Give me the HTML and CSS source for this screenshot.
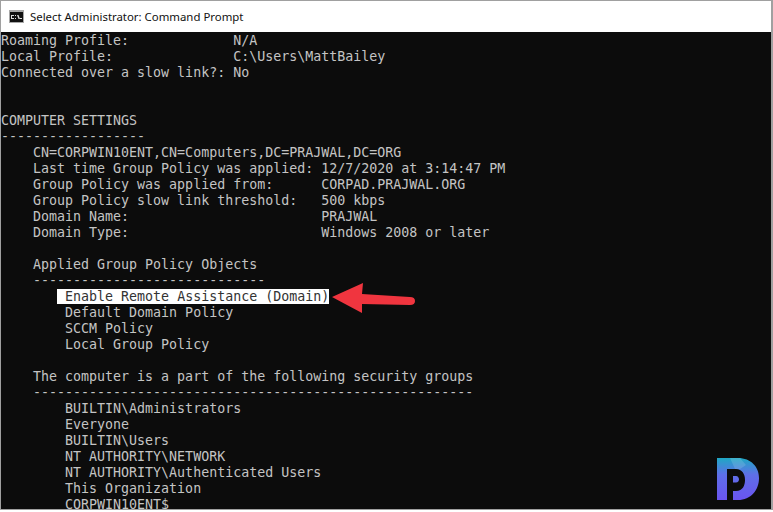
FILE: index.html
```html
<!DOCTYPE html>
<html lang="en">
<head>
<meta charset="utf-8">
<title>Select Administrator: Command Prompt</title>
<link rel="stylesheet" href="styles.css">
</head>
<body>
<div class="window">
  <header class="titlebar">
    <svg class="cmd-icon" width="15" height="13" viewBox="0 0 15 13">
      <rect x="0" y="0" width="15" height="13" fill="#a8a8a8"/>
      <rect x="1" y="2" width="13" height="10" fill="#111"/>
      <rect x="2" y="5" width="3" height="4" fill="#ddd"/>
      <rect x="3" y="6" width="2" height="2" fill="#111"/>
      <rect x="6" y="5" width="1" height="1" fill="#ddd"/>
      <rect x="6" y="8" width="1" height="1" fill="#ddd"/>
      <path d="M8 5 L9.5 5 L11 9 L9.5 9 Z" fill="#ddd"/>
      <rect x="11" y="8" width="2" height="1" fill="#ddd"/>
    </svg>
    <span class="title">Select Administrator: Command Prompt</span>
  </header>
  <main class="console">
<pre class="output">Roaming Profile:             N/A
Local Profile:               C:\Users\MattBailey
Connected over a slow link?: No


COMPUTER SETTINGS
------------------
    CN=CORPWIN10ENT,CN=Computers,DC=PRAJWAL,DC=ORG
    Last time Group Policy was applied: 12/7/2020 at 3:14:47 PM
    Group Policy was applied from:      CORPAD.PRAJWAL.ORG
    Group Policy slow link threshold:   500 kbps
    Domain Name:                        PRAJWAL
    Domain Type:                        Windows 2008 or later

    Applied Group Policy Objects
    -----------------------------
       <span class="selected"> Enable Remote Assistance (Domain)</span>
        Default Domain Policy
        SCCM Policy
        Local Group Policy

    The computer is a part of the following security groups
    -------------------------------------------------------
        BUILTIN\Administrators
        Everyone
        BUILTIN\Users
        NT AUTHORITY\NETWORK
        NT AUTHORITY\Authenticated Users
        This Organization
        CORPWIN10ENT$</pre>
    <svg class="arrow" width="84" height="31" viewBox="0 0 84 31">
      <path d="M0 14 L31 0 L30 11 L78 14 Q83 14 83 18 Q83 22 78 22 L30 21 L30 30 Z" fill="#f0353f"/>
    </svg>
    <svg class="logo" width="44" height="44" viewBox="0 0 44 44">
      <defs>
        <linearGradient id="logo-grad" x1="0" y1="0" x2="0" y2="1">
          <stop offset="0" stop-color="#1fa8c4"/>
          <stop offset="0.4" stop-color="#5f6fe8"/>
          <stop offset="1" stop-color="#6a54f0"/>
        </linearGradient>
      </defs>
      <path fill="url(#logo-grad)" fill-rule="evenodd" d="M1 1 H22 C35 1 43 10 43 21 C43 33 35 43 22 43 H1 Z M11 12 V43 H17 V34 H20 C27 34 29 28 29 23 C29 17 26 12 20 12 Z M17 19 H20 C22 19 23 21 23 22.500 C23 24 22 25.500 20 25.500 H17 Z"/>
      <path d="M14 1 H24 L30 8 L24 12 H19 Z" fill="#ffffff" opacity="0.14"/>
    </svg>
  </main>
</div>
</body>
</html>
```
FILE: styles.css
```css
html, body {
  margin: 0;
  padding: 0;
  height: 100%;
  background: #fff;
  overflow: hidden;
}
.window {
  box-sizing: border-box;
  width: 773px;
  height: 510px;
  display: flex;
  flex-direction: column;
  border: 1px solid #a0a0a0;
  border-right-width: 2px;
}
.titlebar {
  display: flex;
  align-items: center;
  gap: 6px;
  height: 31px;
  flex: none;
  padding-left: 8px;
  background: #fff;
}
.title {
  font: 11.4px "Noto Sans", sans-serif;
  color: #111;
}
.console {
  position: relative;
  flex: 1;
  overflow: hidden;
  background: #0c0c0c;
}
.output {
  margin: 0;
  padding-top: 1px;
  font: 13.3px/16px "DejaVu Sans Mono", monospace;
  color: #c4c4c4;
}
.selected {
  display: inline-block;
  height: 15px;
  background: #fff;
  color: #333;
}
.arrow {
  position: absolute;
  left: 331px;
  top: 251px;
}
.logo {
  position: absolute;
  left: 715px;
  top: 425px;
}
```
